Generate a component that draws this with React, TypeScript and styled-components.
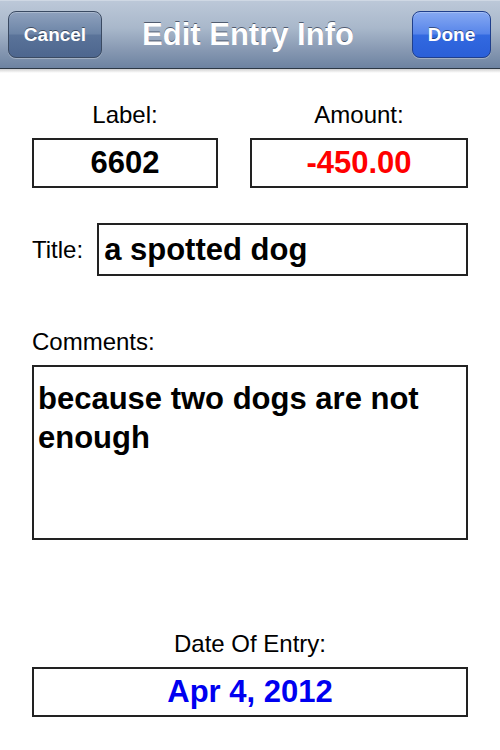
import React from 'react'
import styled, { createGlobalStyle } from 'styled-components'

const GlobalStyle = createGlobalStyle`
  html, body {
    margin: 0;
    padding: 0;
    background: #fff;
  }
  body {
    font-family: 'Liberation Sans', Arial, sans-serif;
    color: #000;
  }
`

const Screen = styled.div`
  width: 500px;
  height: 750px;
  background: #fff;
  overflow: hidden;
`

const NavBar = styled.div`
  position: relative;
  height: 69px;
  display: flex;
  align-items: center;
  padding: 0 9px 0 8px;
  box-sizing: border-box;
  background: linear-gradient(#bcc8d8 0%, #a9b8cb 40%, #8597b1 75%, #6d83a1 100%);
  border-top: 1px solid #cfd8e4;
  border-bottom: 1px solid #2d3844;

  &::after {
    content: '';
    position: absolute;
    left: 0;
    right: 0;
    bottom: -5px;
    height: 4px;
    background: linear-gradient(rgba(0, 0, 0, 0.18), rgba(0, 0, 0, 0));
  }
`

const NavTitle = styled.h1`
  flex: 1;
  margin: 0;
  padding-right: 18px;
  text-align: center;
  font-size: 31px;
  font-weight: bold;
  color: #fff;
  text-shadow: 0 -1px 0 rgba(40, 50, 70, 0.7);
`

interface NavButtonProps {
  readonly $primary?: boolean
}

const NavButton = styled.button<NavButtonProps>`
  height: 47px;
  padding: 0;
  border-radius: 8px;
  font-family: 'Liberation Sans', Arial, sans-serif;
  font-size: 19px;
  font-weight: bold;
  color: #fff;
  text-shadow: 0 -1px 0 rgba(0, 0, 0, 0.45);
  border: 1px solid ${props => (props.$primary ? '#1f3f8c' : '#3a4a62')};
  background: ${props =>
    props.$primary
      ? 'linear-gradient(#86a9f2 0%, #5785ea 48%, #3269e0 52%, #2a5fd8 100%)'
      : 'linear-gradient(#8ea1bd 0%, #6d85a7 48%, #5a7399 52%, #4d668e 100%)'};
  box-shadow: 0 1px 0 rgba(255, 255, 255, 0.3), inset 0 1px 0 rgba(255, 255, 255, 0.25);
`

const CancelButton = styled(NavButton)`
  width: 94px;
`

const DoneButton = styled(NavButton)`
  width: 79px;
`

const Form = styled.div`
  display: flex;
  flex-direction: column;
  padding: 32px 32px 0 32px;
`

const TopRow = styled.div`
  display: grid;
  grid-template-columns: 186px 218px;
  column-gap: 32px;
`

const Field = styled.div`
  display: flex;
  flex-direction: column;
`

interface LabelProps {
  readonly $center?: boolean
}

const Label = styled.div<LabelProps>`
  font-size: 24px;
  line-height: 28px;
  text-align: ${props => (props.$center ? 'center' : 'left')};
  margin-bottom: 9px;
`

interface BoxProps {
  readonly $height: number
  readonly $color?: string
  readonly $center?: boolean
}

const Box = styled.div<BoxProps>`
  box-sizing: border-box;
  height: ${props => props.$height}px;
  border: 2px solid #222;
  font-size: 31px;
  font-weight: bold;
  color: ${props => props.$color || '#000'};
  display: flex;
  align-items: center;
  justify-content: ${props => (props.$center ? 'center' : 'flex-start')};
  padding: 0 5px;
`

const TitleRow = styled.div`
  display: flex;
  align-items: center;
  margin-top: 35px;
  gap: 14px;
`

const InlineLabel = styled.div`
  font-size: 24px;
`

const TitleBox = styled(Box)`
  flex: 1;
`

const CommentsField = styled(Field)`
  margin-top: 52px;
`

const CommentBox = styled.div`
  box-sizing: border-box;
  height: 175px;
  border: 2px solid #222;
  padding: 12px 4px 0 4px;
  font-size: 31px;
  font-weight: bold;
  line-height: 39px;
`

const DateField = styled(Field)`
  margin-top: 90px;
`

export default function App() {
  return (
    <Screen>
      <GlobalStyle />
      <NavBar>
        <CancelButton>Cancel</CancelButton>
        <NavTitle>Edit Entry Info</NavTitle>
        <DoneButton $primary>Done</DoneButton>
      </NavBar>
      <Form>
        <TopRow>
          <Field>
            <Label $center>Label:</Label>
            <Box $height={50} $center>6602</Box>
          </Field>
          <Field>
            <Label $center>Amount:</Label>
            <Box $height={50} $center $color="#f00">-450.00</Box>
          </Field>
        </TopRow>
        <TitleRow>
          <InlineLabel>Title:</InlineLabel>
          <TitleBox $height={53}>a spotted dog</TitleBox>
        </TitleRow>
        <CommentsField>
          <Label>Comments:</Label>
          <CommentBox>because two dogs are not enough</CommentBox>
        </CommentsField>
        <DateField>
          <Label $center>Date Of Entry:</Label>
          <Box $height={50} $center $color="#0000f0">Apr 4, 2012</Box>
        </DateField>
      </Form>
    </Screen>
  )
}
